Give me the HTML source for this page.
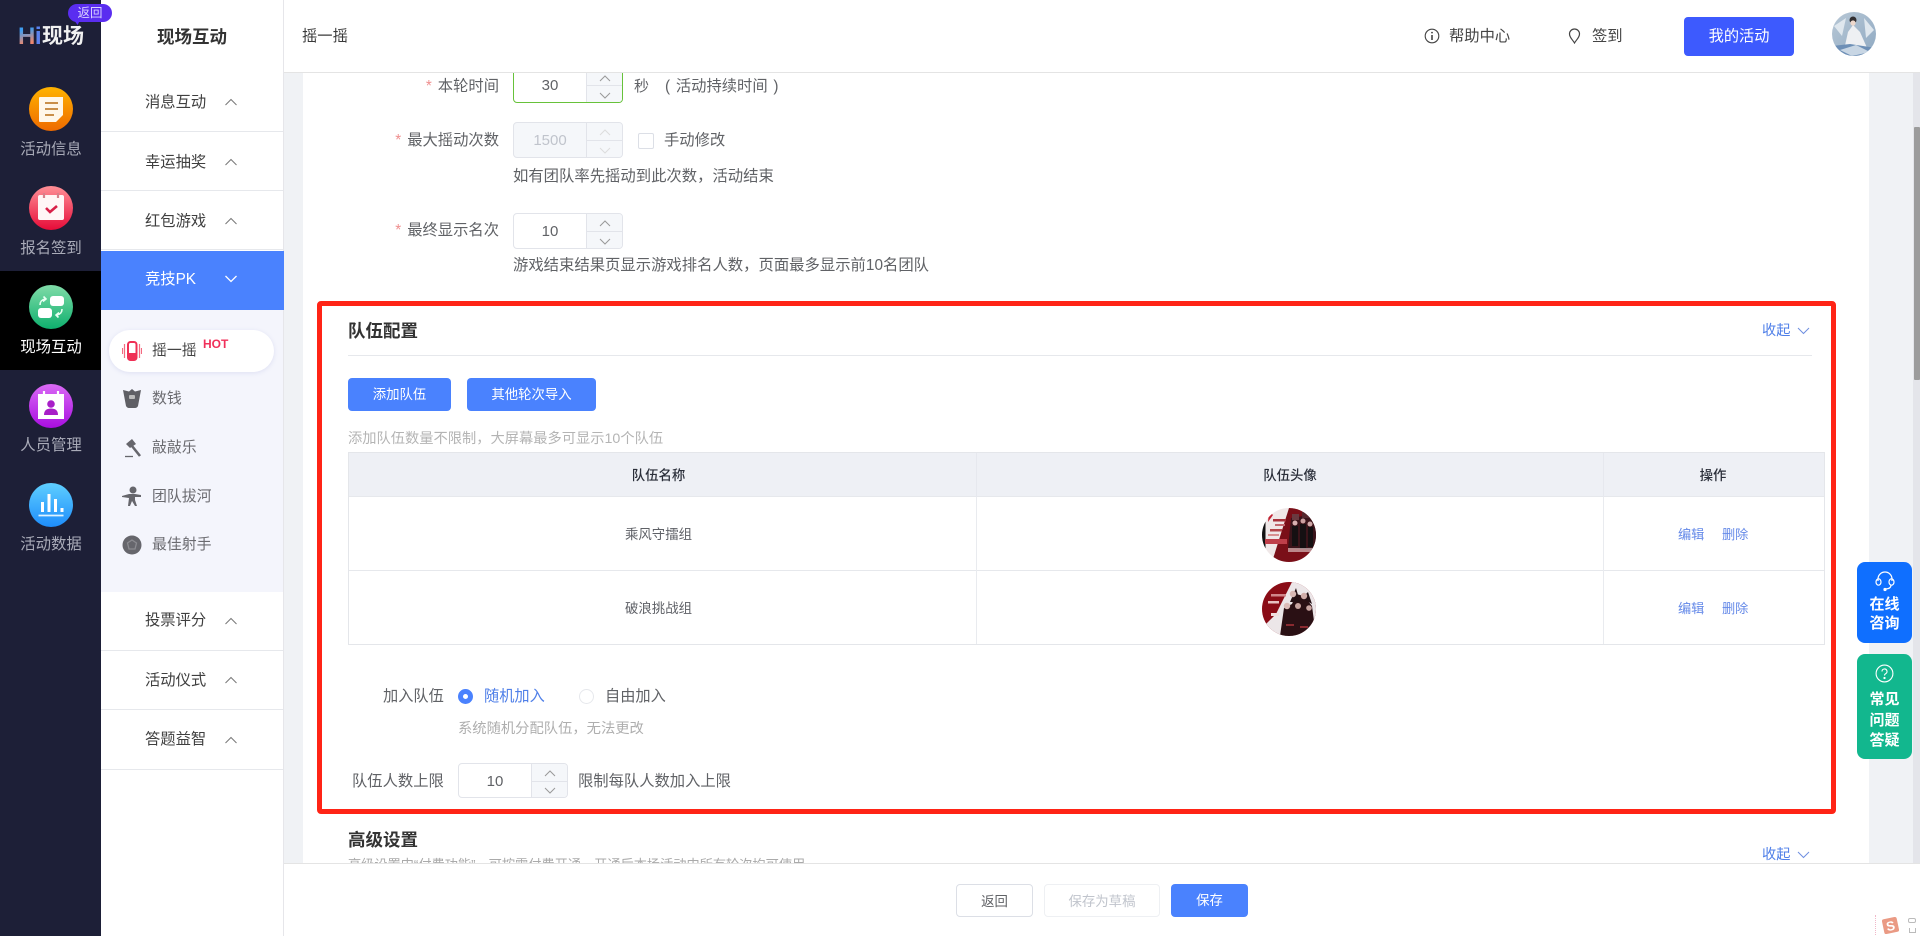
<!DOCTYPE html>
<html lang="zh-CN"><head><meta charset="utf-8"><title>摇一摇</title>
<style>
*{box-sizing:border-box}
html,body{margin:0;padding:0;width:1920px;height:936px;overflow:hidden;background:#f0f2f5;font-family:"Liberation Sans","Noto Sans CJK SC",sans-serif;color:#606266}
.a{position:absolute}
.t{position:absolute;white-space:nowrap;line-height:20px;font-size:15.3px;margin-top:1px}
.c{transform:translateX(-50%)}
.r{transform:translateX(-100%)}
.side{color:#a9abb8;font-size:15.4px;left:51px}
.m{left:145px;font-size:15.3px;color:#3f3f3f}
.sub{left:152px;font-size:14.9px;color:#6b6b70}
.hr{position:absolute;height:1px;background:#e6e8ec}
.btn{position:absolute;border-radius:4px;text-align:center;font-size:13.4px;color:#fff;background:#4a82fe}
.num{position:absolute;width:110px;height:36px;border:1px solid #e2e4ea;border-radius:4px;background:#fff;overflow:hidden}
.num b{position:absolute;left:0;width:72px;top:1px;line-height:34px;text-align:center;font-weight:400;font-size:15px;color:#606266}
.num i{position:absolute;left:72px;right:0;top:0;bottom:0;background:#f5f7fa;border-left:1px solid #e2e4ea}
.num i:before{content:"";position:absolute;left:0;right:0;top:50%;height:1px;background:#e2e4ea}
.num svg{position:absolute;left:12px;width:12px;height:7px}
.star{color:#ef8f8f;margin-right:6px}
.red{position:absolute;left:317px;top:301px;width:1519px;height:513px;border:5px solid #ff2416;border-radius:4px}
.tb{font-size:13.4px;color:#5e6066}
.th{font-size:13.4px;color:#2b2f3a;font-weight:500}
.lk{font-size:13.2px;color:#6489e8}
.blue{color:#4f7fe8}
.fl{font-size:15px;color:#fff;font-weight:700}
</style></head><body>

<!-- main card -->
<div class="a" style="left:303px;top:72px;width:1566px;height:800px;background:#fff"></div>
<!-- scrollbar -->
<div class="a" style="left:1913px;top:72px;width:7px;height:800px;background:#e4e5ea"></div>
<div class="a" style="left:1914px;top:127px;width:6px;height:253px;background:#9c9c9c;border-radius:1px"></div>

<!-- form top -->
<div class="t r" style="left:499px;top:76px"><span class="star">*</span>本轮时间</div>
<div class="num" style="left:513px;top:67px;border-color:#67c23a"><b>30</b><i></i><svg style="top:7px;left:85px" viewBox="0 0 12 7"><path d="M1 6 6 1l5 5" fill="none" stroke="#999"/></svg><svg style="top:24px;left:85px" viewBox="0 0 12 7"><path d="M1 1l5 5 5-5" fill="none" stroke="#999"/></svg></div>
<div class="t" style="left:634px;top:76px;font-size:15px">秒</div>
<div class="t" style="left:665px;top:76px;font-size:15.3px;word-spacing:1.500px">( 活动持续时间 )</div>

<div class="t r" style="left:499px;top:130px"><span class="star">*</span>最大摇动次数</div>
<div class="num" style="left:513px;top:122px;background:#f5f7fa"><b style="color:#c0c4cc">1500</b><i></i><svg style="top:6px;left:85px" viewBox="0 0 12 7"><path d="M1 6 6 1l5 5" fill="none" stroke="#ddd"/></svg><svg style="top:24px;left:85px" viewBox="0 0 12 7"><path d="M1 1l5 5 5-5" fill="none" stroke="#ddd"/></svg></div>
<div class="a" style="left:638px;top:133px;width:16px;height:16px;border:1px solid #dcdfe6;border-radius:2px"></div>
<div class="t" style="left:664px;top:130px">手动修改</div>
<div class="t" style="left:513px;top:166px;font-size:15.35px">如有团队率先摇动到此次数，活动结束</div>

<div class="t r" style="left:499px;top:220px"><span class="star">*</span>最终显示名次</div>
<div class="num" style="left:513px;top:213px"><b>10</b><i></i><svg style="top:6px;left:85px" viewBox="0 0 12 7"><path d="M1 6 6 1l5 5" fill="none" stroke="#999"/></svg><svg style="top:24px;left:85px" viewBox="0 0 12 7"><path d="M1 1l5 5 5-5" fill="none" stroke="#999"/></svg></div>
<div class="t" style="left:513px;top:255px;font-size:15.35px">游戏结束结果页显示游戏排名人数，页面最多显示前10名团队</div>

<!-- red box -->
<div class="red"></div>
<div class="t" style="left:348px;top:320px;font-size:17.5px;font-weight:700;color:#333">队伍配置</div>
<div class="t blue" style="left:1762px;top:320px;font-size:14.2px">收起</div>
<svg class="a" style="left:1797px;top:327px" width="13" height="8" viewBox="0 0 13 8"><path d="M1 1l5.500 5.500L12 1" fill="none" stroke="#6f8fe0"/></svg>
<div class="hr" style="left:348px;top:355px;width:1464px"></div>

<div class="btn" style="left:348px;top:378px;width:103px;height:33px;line-height:34px">添加队伍</div>
<div class="btn" style="left:467px;top:378px;width:129px;height:33px;line-height:34px">其他轮次导入</div>
<div class="t" style="left:348px;top:428px;font-size:14.25px;color:#b4b4b4">添加队伍数量不限制，大屏幕最多可显示10个队伍</div>

<!-- table -->
<div class="a" style="left:348px;top:452px;width:1477px;height:193px;border:1px solid #e4e6ea;background:#fff"></div>
<div class="a" style="left:349px;top:453px;width:1475px;height:44px;background:#eef0f5"></div>
<div class="hr" style="left:349px;top:496px;width:1475px"></div>
<div class="hr" style="left:349px;top:570px;width:1475px"></div>
<div class="a" style="left:976px;top:497px;width:1px;height:147px;background:#e9ebef"></div>
<div class="a" style="left:1603px;top:497px;width:1px;height:147px;background:#e9ebef"></div>
<div class="a" style="left:976px;top:453px;width:1px;height:44px;background:#e6e8ee"></div>
<div class="a" style="left:1603px;top:453px;width:1px;height:44px;background:#e6e8ee"></div>
<div class="t c th" style="left:658.500px;top:465px">队伍名称</div>
<div class="t c th" style="left:1290px;top:465px">队伍头像</div>
<div class="t c th" style="left:1713px;top:465px">操作</div>
<div class="t c tb" style="left:658.500px;top:524px">乘风守擂组</div>
<div class="t c tb" style="left:658.500px;top:598px">破浪挑战组</div>
<div class="t lk" style="left:1678px;top:524px">编辑</div><div class="t lk" style="left:1722px;top:524px">删除</div>
<div class="t lk" style="left:1678px;top:598px">编辑</div><div class="t lk" style="left:1722px;top:598px">删除</div>

<svg class="a" style="left:1262px;top:508px" width="54" height="54" viewBox="0 0 54 54">
<defs><clipPath id="av1"><circle cx="27" cy="27" r="27"/></clipPath></defs>
<g clip-path="url(#av1)"><rect width="54" height="54" fill="#f0e8e8"/>
<rect x="0" y="12" width="3.500" height="30" fill="#111"/>
<path d="M27 0H54V54H10Z" fill="#7a0f18"/>
<path d="M29 10 54 6V42L26 40Z" fill="#3a141a"/>
<rect x="30" y="6" width="7" height="6" fill="#6a3a40"/><rect x="40" y="4" width="7" height="6" fill="#55282e"/>
<circle cx="33" cy="15" r="2.500" fill="#d8b0b0"/><circle cx="41" cy="13" r="2.500" fill="#caa0a0"/><circle cx="48" cy="16" r="2.500" fill="#d0a8a8"/>
<path d="M30 18h6v20h-6zM38 16h6v24h-6zM46 19h5v20h-5z" fill="#151012"/>
<path d="M26 40h26l-2 4H26z" fill="#e8d8d8" opacity=".6"/>
<rect x="11" y="11" width="13" height="2.500" fill="#a8323a"/><rect x="13" y="16" width="10" height="2" fill="#c26a70"/><rect x="8" y="21" width="12" height="2.500" fill="#b4474b"/>
<rect x="3" y="31" width="22" height="5" fill="#bf3f4a"/><rect x="6" y="26" width="11" height="2" fill="#d89090"/><path d="M7 3 11 7 6 14Z" fill="#c02030"/></g></svg>

<svg class="a" style="left:1262px;top:582px" width="54" height="54" viewBox="0 0 54 54">
<defs><clipPath id="av2"><circle cx="27" cy="27" r="27"/></clipPath></defs>
<g clip-path="url(#av2)"><rect width="54" height="54" fill="#8a0c16"/>
<path d="M30 0H54V54H0V46L14 32Z" fill="#ece6e8"/>
<path d="M18 54 22 26 30 22 34 12 42 14 50 24 54 54Z" fill="#2a1014"/>
<path d="M28 20 34 6 38 20ZM40 16 46 10 50 22Z" fill="#241014"/>
<circle cx="31" cy="12" r="3.200" fill="#d8b8b4"/><circle cx="42" cy="14" r="3.200" fill="#d0aca8"/><circle cx="25" cy="24" r="3.200" fill="#dcbcb8"/><circle cx="36" cy="24" r="3" fill="#c8a4a0"/><circle cx="47" cy="26" r="2.800" fill="#c8a4a0"/>
<rect x="9" y="12" width="15" height="2.500" fill="#d0868a"/><rect x="6" y="19" width="11" height="2.500" fill="#e8c0c0"/>
<rect x="9" y="31" width="8" height="3" fill="#f0dede"/><rect x="24" y="42" width="8" height="2" fill="#8a2a30"/><rect x="38" y="44" width="8" height="2" fill="#8a2a30"/></g></svg>

<!-- join -->
<div class="t" style="left:383px;top:686px;font-size:15.2px">加入队伍</div>
<div class="a" style="left:458px;top:689px;width:15px;height:15px;border-radius:50%;border:5px solid #4a82fe;background:#fff"></div>
<div class="t blue" style="left:484px;top:686px;font-size:15.2px">随机加入</div>
<div class="a" style="left:579px;top:689px;width:15px;height:15px;border-radius:50%;border:1px solid #e6e8ec;background:#fff"></div>
<div class="t" style="left:605px;top:686px;font-size:15.2px">自由加入</div>
<div class="t" style="left:458px;top:718px;font-size:14.3px;color:#aeaeae">系统随机分配队伍，无法更改</div>
<div class="t" style="left:352px;top:771px">队伍人数上限</div>
<div class="num" style="left:458px;top:763px;height:35px"><b style="line-height:33px">10</b><i></i><svg style="top:6px;left:85px" viewBox="0 0 12 7"><path d="M1 6 6 1l5 5" fill="none" stroke="#999"/></svg><svg style="top:23px;left:85px" viewBox="0 0 12 7"><path d="M1 1l5 5 5-5" fill="none" stroke="#999"/></svg></div>
<div class="t" style="left:578px;top:771px">限制每队人数加入上限</div>

<!-- advanced -->
<div class="t" style="left:348px;top:829px;font-size:17.5px;font-weight:700;color:#333">高级设置</div>
<div class="t" style="left:348px;top:854px;font-size:13.2px;color:#aaa">高级设置中“付费功能”，可按需付费开通，开通后本场活动中所有轮次均可使用</div>
<div class="t blue" style="left:1762px;top:844px;font-size:14.2px">收起</div>
<svg class="a" style="left:1797px;top:851px" width="13" height="8" viewBox="0 0 13 8"><path d="M1 1l5.500 5.500L12 1" fill="none" stroke="#6f8fe0"/></svg>

<!-- float -->
<div class="a" style="left:1857px;top:562px;width:55px;height:81px;background:#0f6fff;border-radius:8px"></div>
<svg class="a" style="left:1875px;top:570px" width="20" height="22" viewBox="0 0 20 22" fill="none" stroke="#fff" stroke-width="1.200"><path d="M3 11V9a7 7 0 0 1 14 0v2"/><ellipse cx="3.500" cy="12" rx="2.500" ry="3.200"/><ellipse cx="16.500" cy="12" rx="2.500" ry="3.200"/><path d="M16 15c0 3-3 4-6 4" /><circle cx="10" cy="19.500" r="1" fill="#fff"/></svg>
<div class="t c fl" style="left:1884.500px;top:594px">在线</div>
<div class="t c fl" style="left:1884.500px;top:613px">咨询</div>
<div class="a" style="left:1857px;top:654px;width:55px;height:105px;background:#12b78e;border-radius:8px"></div>
<svg class="a" style="left:1875px;top:664px" width="19" height="19" viewBox="0 0 19 19" fill="none" stroke="#fff" stroke-width="1.100"><circle cx="9.500" cy="9.500" r="8.400"/><path d="M7 7.500a2.500 2.500 0 1 1 3.600 2.200c-.8.4-1.100.9-1.100 1.800"/><circle cx="9.500" cy="14" r=".6" fill="#fff"/></svg>
<div class="t c fl" style="left:1884.500px;top:689px">常见</div>
<div class="t c fl" style="left:1884.500px;top:710px">问题</div>
<div class="t c fl" style="left:1884.500px;top:730px">答疑</div>

<!-- footer -->
<div class="a" style="left:284px;top:863px;width:1636px;height:73px;background:#fff;border-top:1px solid #e4e4e4"></div>
<div class="btn" style="left:956px;top:884px;width:77px;height:33px;line-height:33px;background:#fff;border:1px solid #dcdfe6;color:#606266">返回</div>
<div class="btn" style="left:1044px;top:884px;width:116px;height:33px;line-height:33px;background:#fff;border:1px solid #eef0f3;color:#c0c4cc">保存为草稿</div>
<div class="btn" style="left:1171px;top:884px;width:77px;height:33px;line-height:34px">保存</div>
<div class="a" style="left:1875px;top:915px;width:1px;height:20px;border-left:1px dotted #f0b8c8"></div>
<svg class="a" style="left:1881px;top:916px" width="19" height="19" viewBox="0 0 19 19"><rect x="2" y="2" width="15" height="15" rx="2" fill="#ea9a84" transform="rotate(-12 9.500 9.500)"/><text x="9.500" y="14.500" font-size="13" font-weight="700" text-anchor="middle" fill="#fff" font-family="Liberation Sans" transform="rotate(-12 9.500 9.500)">S</text></svg>
<div class="a" style="left:1908px;top:918px;width:8px;height:5px;border:1px solid #bbb;border-radius:2px"></div>
<div class="a" style="left:1909px;top:928px;width:7px;height:5px;border:1px solid #bbb;border-top:0"></div>

<!-- header -->
<div class="a" style="left:284px;top:0;width:1636px;height:73px;background:#fff;border-bottom:1px solid #e4e4e4"></div>
<div class="t" style="left:302px;top:26px;color:#3a3a3a">摇一摇</div>
<svg class="a" style="left:1424px;top:28px" width="16" height="16" viewBox="0 0 16 16" fill="none" stroke="#444" stroke-width="1.100"><circle cx="8" cy="8" r="6.800"/><path d="M8 7v5" stroke-width="1.600"/><circle cx="8" cy="4.600" r=".9" fill="#444" stroke="none"/></svg>
<div class="t" style="left:1449px;top:26px;color:#444">帮助中心</div>
<svg class="a" style="left:1568px;top:28px" width="13" height="16" viewBox="0 0 13 16" fill="none" stroke="#444" stroke-width="1.200"><path d="M6.500 15C4.500 11.500 1.500 9.500 1.500 6a5 5 0 0 1 10 0c0 3.500-3 5.500-5 9z"/></svg>
<div class="t" style="left:1592px;top:26px;color:#444">签到</div>
<div class="a" style="left:1684px;top:17px;width:110px;height:39px;background:#3d5afe;border-radius:4px;color:#fff;text-align:center;line-height:40px;font-size:15.2px">我的活动</div>
<svg class="a" style="left:1832px;top:12px" width="44" height="44" viewBox="0 0 44 44"><defs><clipPath id="ua"><circle cx="22" cy="22" r="22"/></clipPath><linearGradient id="ub" x1="0" y1="0" x2="1" y2="1"><stop offset="0" stop-color="#b8c8d6"/><stop offset="1" stop-color="#8fa9c2"/></linearGradient></defs><g clip-path="url(#ua)"><rect width="44" height="44" fill="url(#ub)"/><path d="M2 14 14 6 10 24ZM32 6 42 18 34 26Z" fill="#dfe7ee"/><path d="M12 38 16 20 21 13 28 20 36 38Z" fill="#eef0f3"/><path d="M0 34 18 32 44 36V44H0Z" fill="#6d8fb6"/><path d="M8 38 24 33 38 40 20 44Z" fill="#c8d6e4"/><circle cx="21" cy="8" r="3.500" fill="#333032"/><circle cx="21" cy="11" r="2.600" fill="#eed8cc"/></g></svg>

<!-- left rail -->
<div class="a" style="left:0;top:0;width:101px;height:936px;background:#1d1f37"></div>
<div class="a" style="left:0;top:271px;width:101px;height:99px;background:#000"></div>

<!-- rail icons -->
<svg class="a" style="left:29px;top:87px" width="44" height="44" viewBox="0 0 44 44"><defs><linearGradient id="g1" x1="0" y1="0" x2="0" y2="1"><stop offset="0" stop-color="#ffb300"/><stop offset="1" stop-color="#ee6a00"/></linearGradient></defs><circle cx="22" cy="22" r="22" fill="url(#g1)"/><path d="M11 10h23v18l-7 7H11a1 1 0 0 1-1-1V11a1 1 0 0 1 1-1z" fill="#fff7ea"/><path d="M16 16h13M16 22h13M16 28h9" stroke="#c98f4a" stroke-width="2"/></svg>
<div class="t c side" style="top:139px">活动信息</div>

<svg class="a" style="left:29px;top:186px" width="44" height="44" viewBox="0 0 44 44"><defs><linearGradient id="g2" x1="0" y1="0" x2="0" y2="1"><stop offset="0" stop-color="#ff8f96"/><stop offset="1" stop-color="#e60b38"/></linearGradient></defs><circle cx="22" cy="22" r="22" fill="url(#g2)"/><rect x="9" y="9" width="26" height="25" rx="2" fill="#fff6f6"/><path d="M15 7v5M29 7v5" stroke="#d7808a" stroke-width="2.200"/><path d="M17 22l4 4 7-6" fill="none" stroke="#d81f47" stroke-width="2.600"/></svg>
<div class="t c side" style="top:238px">报名签到</div>

<svg class="a" style="left:29px;top:285px" width="44" height="44" viewBox="0 0 44 44"><defs><linearGradient id="g3" x1="0" y1="0" x2="0" y2="1"><stop offset="0" stop-color="#80dca8"/><stop offset="1" stop-color="#0eb06e"/></linearGradient></defs><circle cx="22" cy="22" r="22" fill="url(#g3)"/><rect x="21" y="11" width="14" height="10" rx="3" fill="#fff"/><rect x="9" y="23" width="14" height="10" rx="3" fill="#fff"/><path d="M11 20c0-3 1-5 5-6M14.500 11.500 17 14l-3 2.500M33 24c0 3-1 5-5 6M29.500 32.500 27 30l3-2.500" fill="none" stroke="#e8fff2" stroke-width="1.600"/></svg>
<div class="t c side" style="top:337px;color:#fff">现场互动</div>

<svg class="a" style="left:29px;top:384px" width="44" height="44" viewBox="0 0 44 44"><defs><linearGradient id="g4" x1="0" y1="0" x2="0" y2="1"><stop offset="0" stop-color="#da6af5"/><stop offset="1" stop-color="#a80ee0"/></linearGradient></defs><circle cx="22" cy="22" r="22" fill="url(#g4)"/><rect x="9" y="10" width="26" height="25" fill="#fff" /><path d="M15 7v5M29 7v5" stroke="#fff" stroke-width="2.200"/><circle cx="22" cy="20" r="3.800" fill="#a81fc8"/><path d="M15 31c0-5 3-6.500 7-6.500s7 1.500 7 6.500z" fill="#a81fc8"/></svg>
<div class="t c side" style="top:435px">人员管理</div>

<svg class="a" style="left:29px;top:483px" width="44" height="44" viewBox="0 0 44 44"><defs><linearGradient id="g5" x1="0" y1="0" x2="0" y2="1"><stop offset="0" stop-color="#5fcfff"/><stop offset="1" stop-color="#1e8dfb"/></linearGradient></defs><circle cx="22" cy="22" r="22" fill="url(#g5)"/><path d="M13.500 19v10M20 11v18M26.500 16v13M33 25v4" stroke="#fff" stroke-width="3"/><path d="M9.500 32.500h25" stroke="#dff3ff" stroke-width="1.800"/></svg>
<div class="t c side" style="top:534px">活动数据</div>

<!-- second sidebar -->
<div class="a" style="left:101px;top:0;width:183px;height:936px;background:#fff;border-right:1px solid #e6e6ea"></div>
<div class="t c" style="left:192px;top:26px;font-size:17.5px;font-weight:700;color:#333">现场互动</div>

<!-- logo -->
<div class="a" style="left:18px;top:23px;font-size:24px;line-height:27px;font-weight:700;letter-spacing:-.5px;white-space:nowrap;background:linear-gradient(165deg,#3f9df0 25%,#f2886a 70%,#c06ac0);-webkit-background-clip:text;background-clip:text;color:transparent;z-index:5">H<span style="color:#5a82f0">i</span></div>
<div class="a" style="left:42px;top:23px;font-size:21px;line-height:27px;font-weight:700;white-space:nowrap;color:#f1f1f1;z-index:5">现场</div>
<div class="a" style="left:68px;top:4px;width:44px;height:18px;border-radius:9px;background:#5a2df0;color:#d9d2ff;text-align:center;font-size:12.5px;line-height:18px;z-index:6">返回</div>
<div class="a" style="left:74px;top:20px;width:6px;height:5px;background:#5a2df0;clip-path:polygon(0 0,100% 0,60% 100%);z-index:6"></div>

<div class="t m" style="top:92px">消息互动</div>
<div class="hr" style="left:101px;top:131px;width:182px"></div>
<div class="t m" style="top:152px">幸运抽奖</div>
<div class="hr" style="left:101px;top:190px;width:182px"></div>
<div class="t m" style="top:211px">红包游戏</div>
<div class="hr" style="left:101px;top:249px;width:182px"></div>
<div class="a" style="left:101px;top:251px;width:183px;height:59px;background:#4a82fe"></div>
<div class="t m" style="top:269px;color:#fff">竞技PK</div>
<div class="a" style="left:101px;top:310px;width:182px;height:282px;background:#f4f5fc"></div>
<div class="t m" style="top:610px">投票评分</div>
<div class="hr" style="left:101px;top:650px;width:182px"></div>
<div class="t m" style="top:670px">活动仪式</div>
<div class="hr" style="left:101px;top:709px;width:182px"></div>
<div class="t m" style="top:729px">答题益智</div>
<div class="hr" style="left:101px;top:769px;width:182px"></div>

<svg class="a" style="left:225px;top:98px" width="12" height="8" viewBox="0 0 12 8"><path d="M.5 7 6 1.500 11.500 7" fill="none" stroke="#777"/></svg>
<svg class="a" style="left:225px;top:158px" width="12" height="8" viewBox="0 0 12 8"><path d="M.5 7 6 1.500 11.500 7" fill="none" stroke="#777"/></svg>
<svg class="a" style="left:225px;top:217px" width="12" height="8" viewBox="0 0 12 8"><path d="M.5 7 6 1.500 11.500 7" fill="none" stroke="#777"/></svg>
<svg class="a" style="left:225px;top:275px" width="12" height="8" viewBox="0 0 12 8"><path d="M.5 1 6 6.500 11.500 1" fill="none" stroke="#fff" stroke-width="1.300"/></svg>
<svg class="a" style="left:225px;top:617px" width="12" height="8" viewBox="0 0 12 8"><path d="M.5 7 6 1.500 11.500 7" fill="none" stroke="#777"/></svg>
<svg class="a" style="left:225px;top:676px" width="12" height="8" viewBox="0 0 12 8"><path d="M.5 7 6 1.500 11.500 7" fill="none" stroke="#777"/></svg>
<svg class="a" style="left:225px;top:736px" width="12" height="8" viewBox="0 0 12 8"><path d="M.5 7 6 1.500 11.500 7" fill="none" stroke="#777"/></svg>

<!-- submenu -->
<div class="a" style="left:109px;top:330px;width:165px;height:42px;background:#fff;border-radius:21px;box-shadow:0 1px 5px rgba(120,130,200,.18)"></div>
<svg class="a" style="left:122px;top:340px" width="20" height="22" viewBox="0 0 20 22" fill="none"><rect x="6" y="2" width="8.500" height="18" rx="2.500" stroke="#ef2f55" stroke-width="2"/><rect x="7" y="13" width="6.500" height="6" fill="#ef2f55"/><path d="M2.500 4v14M17.500 4v14M.5 8v6M19.500 8v6" stroke="#f46a80" stroke-width="1.200"/></svg>
<div class="t sub" style="top:340px;color:#444">摇一摇</div>
<div class="t" style="left:203px;top:335px;font-size:12px;font-weight:700;color:#f0305a;line-height:16px">HOT</div>

<svg class="a" style="left:122px;top:388px" width="20" height="21" viewBox="0 0 20 21"><path d="M1 2 7 3.500 10 1l3 2.500L19 2l-3 16q-1 2-3 2H7q-2 0-3-2z" fill="#5f5f65"/><rect x="7" y="7" width="6" height="4" rx="1" fill="#bbb"/></svg>
<div class="t sub" style="top:388px">数钱</div>
<svg class="a" style="left:123px;top:438px" width="19" height="20" viewBox="0 0 19 20"><path d="M3 6 9 1l4 5-6 4z" fill="#66666c"/><path d="M9 8l8 10" stroke="#66666c" stroke-width="2.600"/><path d="M2 18.500h8" stroke="#66666c" stroke-width="1.300"/></svg>
<div class="t sub" style="top:437px">敲敲乐</div>
<svg class="a" style="left:122px;top:486px" width="20" height="21" viewBox="0 0 20 21"><circle cx="11" cy="4" r="3.500" fill="#66666c"/><path d="M0 10 7 8h6l6 1v2l-6 0v3l2 6h-2l-3-5-2 5H6l1-8-7-1z" fill="#66666c"/></svg>
<div class="t sub" style="top:486px">团队拔河</div>
<svg class="a" style="left:122px;top:535px" width="20" height="20" viewBox="0 0 20 20"><circle cx="10" cy="10" r="9.500" fill="#66666c"/><path d="M10 5l4.500 3-1.500 6H7L5.500 8z" fill="none" stroke="#8b8b90" stroke-width="1.300"/></svg>
<div class="t sub" style="top:534px">最佳射手</div>
</body></html>
